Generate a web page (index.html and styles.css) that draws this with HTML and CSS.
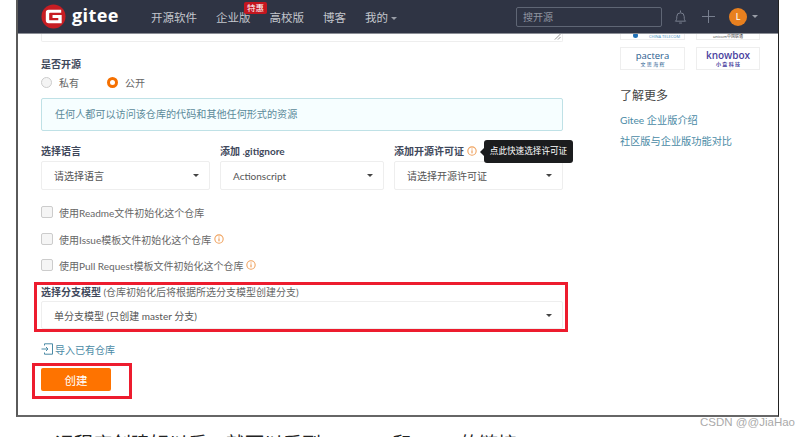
FILE: index.html
```html
<!DOCTYPE html>
<html lang="en">
<head>
  <meta charset="UTF-8">
  <meta name="viewport" content="width=device-width, initial-scale=1.0">
  <title>Gitee</title>
  <link rel="stylesheet" href="styles.css">
</head>
<body>
<div class="frame">
  <!-- Top bar -->
  <header class="topbar">
    <div class="brand">
      <svg class="brand-icon" viewBox="0 0 26 26">
        <circle cx="13" cy="13" r="12.5" fill="#c71d23"/>
        <path d="M5 9a3 3 0 0 1 3-3H21v3H9.500a1 1 0 0 0-1 1v6a1 1 0 0 0 1 1H18v-2.500H12v-3h9.500V20H8a3 3 0 0 1-3-3z" fill="#fff"/>
      </svg>
      <span class="brand-name">gitee</span>
    </div>
    <nav class="nav">
      <a>开源软件</a>
      <a class="nav-deal">企业版<span class="badge">特惠</span></a>
      <a>高校版</a>
      <a>博客</a>
      <a>我的<i class="caret caret-light"></i></a>
    </nav>
    <div class="search">搜开源</div>
    <svg class="bell" viewBox="0 0 14 16">
      <path d="M1.500 12.500c1.200-1 1.500-2 1.500-5a4 4 0 0 1 8 0c0 3 .3 4 1.500 5zM5.500 14.500h3M7 1v2" fill="none" stroke="#7d8494" stroke-width="1"/>
    </svg>
    <svg class="plus" viewBox="0 0 14 14">
      <path d="M7 0v14M0 7h14" stroke="#7d8494" stroke-width="1"/>
    </svg>
    <div class="avatar">L</div>
    <i class="caret caret-light"></i>
  </header>

  <div class="content">
    <!-- Form column -->
    <main class="form">
      <div class="textarea-end">
        <svg class="resize" viewBox="0 0 8 8">
          <path d="M1 7.500 7.500 1M4.500 7.500l3-3" stroke="#888" stroke-width="1"/>
        </svg>
      </div>

      <div class="label open-label">是否开源</div>
      <div class="radios">
        <span class="radio"></span><span class="radio-text">私有</span>
        <span class="radio radio-on"></span><span>公开</span>
      </div>

      <div class="notice">任何人都可以访问该仓库的代码和其他任何形式的资源</div>

      <div class="selects">
        <div>
          <div class="label">选择语言</div>
          <div class="select">请选择语言<i class="caret"></i></div>
        </div>
        <div>
          <div class="label">添加 .gitignore</div>
          <div class="select">Actionscript<i class="caret"></i></div>
        </div>
        <div class="license">
          <div class="label">添加开源许可证
            <svg class="info" viewBox="0 0 12 12"><circle cx="6" cy="6" r="5" fill="none" stroke="#f0a25e" stroke-width="1.300"/><path d="M6 5.200v3.600M6 3v1.200" stroke="#e98a3a" stroke-width="1.200"/></svg>
          </div>
          <div class="tooltip">点此快速选择许可证</div>
          <div class="select">请选择开源许可证<i class="caret"></i></div>
        </div>
      </div>

      <label class="check check-first"><span class="box"></span><span>使用Readme文件初始化这个仓库</span></label>
      <label class="check check-second"><span class="box"></span><span>使用Issue模板文件初始化这个仓库</span>
        <svg class="info" viewBox="0 0 12 12"><circle cx="6" cy="6" r="5" fill="none" stroke="#f0a25e" stroke-width="1.300"/><path d="M6 5.200v3.600M6 3v1.200" stroke="#e98a3a" stroke-width="1.200"/></svg>
      </label>
      <label class="check check-third"><span class="box"></span><span>使用Pull Request模板文件初始化这个仓库</span>
        <svg class="info" viewBox="0 0 12 12"><circle cx="6" cy="6" r="5" fill="none" stroke="#f0a25e" stroke-width="1.300"/><path d="M6 5.200v3.600M6 3v1.200" stroke="#e98a3a" stroke-width="1.200"/></svg>
      </label>

      <div class="branch">
        <div class="label">选择分支模型 <span class="hint">(仓库初始化后将根据所选分支模型创建分支)</span></div>
        <div class="select select-wide">单分支模型 (只创建 master 分支)<i class="caret"></i></div>
      </div>

      <a class="import">
        <svg class="import-icon" viewBox="0 0 12 12">
          <path d="M3.500 2.500V.8h8v10.400h-8V9.500M.5 6h6.500M5 4l2 2-2 2" fill="none" stroke="#4a8aa5" stroke-width="1"/>
        </svg>导入已有仓库
      </a>

      <div class="create-mark">
        <button class="create">创建</button>
      </div>
    </main>

    <!-- Sidebar -->
    <aside class="side">
      <div class="logos">
        <div class="logo logo-cut telecom">CHINA TELECOM</div>
        <div class="logo logo-cut unicom">unicom中国联通</div>
        <div class="logo pactera">pactera<small>文 思 海 辉</small></div>
        <div class="logo knowbox">knowbox<small>小 盒 科 技</small></div>
      </div>
      <h3 class="side-title">了解更多</h3>
      <a class="side-link">Gitee 企业版介绍</a>
      <a class="side-link">社区版与企业版功能对比</a>
    </aside>
  </div>
</div>

<p class="next-line">远程库创建好以后，就可以看到 HTTPS 和 SSH 的链接</p>
<div class="watermark">CSDN @@JiaHao</div>
</body>
</html>
```

FILE: styles.css
```css
* {
  box-sizing: border-box;
}

body {
  margin: 0;
  height: 437px;
  overflow: hidden;
  background-color: #fff;
  color: #555;
  font-family: Lato, "Noto Sans CJK SC", sans-serif;
  font-size: 10px;
  position: relative;
}

.frame {
  margin-left: 16px;
  width: 763px;
  height: 417px;
  border-left: 2px solid #5a5a5a;
  border-right: 1px solid #222;
  border-bottom: 2px solid #666;
  overflow: hidden;
}

/* Top bar */
.topbar {
  display: flex;
  align-items: center;
  height: 34px;
  padding-left: 23px;
  background-color: #2f3444;
  border-bottom: 1px solid #8b8e96;
}

.brand {
  display: flex;
  align-items: center;
  width: 110px;
}

.brand-icon {
  width: 25px;
  height: 25px;
  margin-right: 6px;
}

.brand-name {
  color: #fff;
  font-family: "Open Sans", sans-serif;
  font-size: 18px;
  font-weight: 700;
  letter-spacing: 0.4px;
  line-height: 24px;
  margin-top: -4px;
}

.nav {
  display: flex;
  gap: 19px;
  width: 365px;
  color: #c3c6cd;
  font-size: 11.500px;
}

.nav-deal {
  position: relative;
}

.badge {
  position: absolute;
  left: 28px;
  top: -7px;
  width: 23px;
  height: 12px;
  background-color: #c4161f;
  border-radius: 2px;
  color: #fff;
  font-size: 8.500px;
  line-height: 12px;
  text-align: center;
}

.caret {
  display: inline-block;
  width: 0;
  height: 0;
  margin-left: 3px;
  vertical-align: middle;
  border-left: 3px solid transparent;
  border-right: 3px solid transparent;
  border-top: 3px solid #444;
}

.caret-light {
  border-top-color: #9a9ea8;
}

.search {
  width: 146px;
  height: 20px;
  padding-left: 6px;
  border: 1px solid #5f6675;
  border-radius: 2px;
  color: #8f94a0;
  font-size: 10px;
  line-height: 18px;
}

.bell {
  width: 13px;
  height: 16px;
  margin-left: 12px;
}

.plus {
  width: 13px;
  height: 13px;
  margin-left: 15px;
}

.avatar {
  width: 18px;
  height: 18px;
  margin-left: 14px;
  margin-right: 2px;
  background-color: #e8801f;
  border-radius: 50%;
  color: #fff;
  font-size: 9px;
  line-height: 18px;
  text-align: center;
}

/* Layout under the bar */
.content {
  display: flex;
  padding-left: 23px;
}

.form {
  width: 522px;
}

.textarea-end {
  position: relative;
  height: 8px;
  border: 1px solid #eee;
  border-top: 0;
  border-radius: 0 0 2px 2px;
}

.resize {
  position: absolute;
  right: 1px;
  bottom: 1px;
  width: 7px;
  height: 7px;
}

.label {
  height: 14px;
  color: #40485b;
  font-size: 10px;
  font-weight: 700;
  line-height: 14px;
}

.open-label {
  margin-top: 15px;
}

.radios {
  display: flex;
  align-items: center;
  height: 14px;
  margin-top: 4px;
  color: #666;
}

.radio {
  width: 11px;
  height: 11px;
  margin-right: 7px;
  border: 1px solid #ccc;
  border-radius: 50%;
  background-color: #f4f4f4;
}

.radio-text {
  margin-right: 28px;
}

.radio-on {
  border: 3px solid #f57000;
  background-color: #fff;
}

.notice {
  height: 33px;
  margin-top: 9px;
  padding-left: 13px;
  border: 1px solid #bfe1e6;
  border-radius: 2px;
  background-color: #f6feff;
  color: #5b8a9a;
  font-size: 10.100px;
  line-height: 31px;
}

.selects {
  display: grid;
  grid-template-columns: 169px 164px 169px;
  column-gap: 10px;
  margin-top: 13px;
}

.license {
  position: relative;
}

.select {
  display: flex;
  align-items: center;
  justify-content: space-between;
  height: 29px;
  margin-top: 3px;
  padding: 0 10px 0 12px;
  border: 1px solid #eee;
  border-radius: 2px;
  color: #555;
  font-size: 10px;
}

.info {
  width: 10px;
  height: 10px;
  margin-left: 1px;
  vertical-align: -1px;
}

.tooltip {
  position: absolute;
  left: 90px;
  top: -4px;
  width: 89px;
  height: 23px;
  background-color: #1b1c1e;
  border-radius: 3px;
  color: #fff;
  font-size: 8.600px;
  line-height: 23px;
  text-align: center;
}

.tooltip::before {
  content: "";
  position: absolute;
  left: -4px;
  top: 8px;
  border-top: 4px solid transparent;
  border-bottom: 4px solid transparent;
  border-right: 4px solid #1b1c1e;
}

.check {
  display: flex;
  align-items: center;
  gap: 2px;
  height: 14px;
  color: #666;
}

.check-first {
  margin-top: 15px;
}

.check-second {
  margin-top: 13px;
}

.check-third {
  margin-top: 12px;
}

.box {
  width: 12px;
  height: 12px;
  margin-right: 4px;
  border: 1px solid #ccc;
  border-radius: 2px;
  background-color: #f5f5f5;
}

/* Red annotation boxes drawn on the screenshot */
.branch {
  margin: 10px -5px 0 -7px;
  padding: 0 2px 0 4px;
  border: 3px solid #ed1c2e;
}

.hint {
  color: #666;
  font-weight: 400;
}

.select-wide {
  margin-top: 2px;
  height: 28px;
}

.import {
  display: flex;
  align-items: center;
  height: 14px;
  margin-top: 10px;
  color: #4a8aa5;
}

.import-icon {
  width: 12px;
  height: 12px;
  margin-right: 2px;
}

.create-mark {
  width: 100px;
  margin: 7px 0 0 -9px;
  padding: 2px 18px 5px 6px;
  border: 3px solid #ed1c2e;
}

.create {
  display: block;
  width: 70px;
  height: 23px;
  padding: 0;
  border: 0;
  border-radius: 2px;
  background-color: #fe7300;
  color: #fff;
  font-family: inherit;
  font-size: 11.500px;
}

/* Sidebar */
.side {
  width: 140px;
  margin-left: 57px;
}

.logos {
  display: grid;
  grid-template-columns: 65px 64px;
  gap: 7px 11px;
  grid-template-rows: 6px 23px;
}

.logo {
  border: 1px solid #eee;
  font-family: "Open Sans", "Noto Sans CJK SC", sans-serif;
  font-size: 10px;
  line-height: 11px;
  text-align: center;
  overflow: hidden;
  padding-top: 2px;
}

.logo small {
  display: block;
  font-size: 5px;
  line-height: 6px;
}

.logo-cut {
  border-top: 0;
  padding-top: 0;
  font-size: 4px;
  line-height: 5px;
}

.telecom {
  padding-left: 24px;
  color: #3d8ac0;
  white-space: nowrap;
  position: relative;
}

.telecom::before {
  content: "";
  position: absolute;
  left: 12px;
  top: -1px;
  width: 5px;
  height: 5px;
  border-radius: 50%;
  background-color: #1f6fb5;
}

.unicom {
  color: #444;
}

.pactera {
  color: #2a5d8f;
  font-size: 9.500px;
}

.knowbox {
  color: #4a3fa0;
  font-weight: 600;
}

.side-title {
  margin: 16px 0 0;
  color: #444;
  font-size: 12px;
  font-weight: 400;
  line-height: 20px;
}

.side-link {
  display: block;
  margin-top: 7px;
  color: #4a8aa5;
  font-size: 10.200px;
  line-height: 14px;
}

/* Text of the document around the screenshot */
.next-line {
  margin: 17px 0 0 55px;
  color: #222;
  font-family: "Liberation Serif", "Noto Sans CJK SC", serif;
  font-size: 19px;
  line-height: 22px;
  word-spacing: 2px;
  white-space: nowrap;
}

.watermark {
  position: absolute;
  right: 15px;
  top: 415px;
  color: #aaa;
  font-family: "Liberation Sans", sans-serif;
  font-size: 11.500px;
  line-height: 14px;
}
```
